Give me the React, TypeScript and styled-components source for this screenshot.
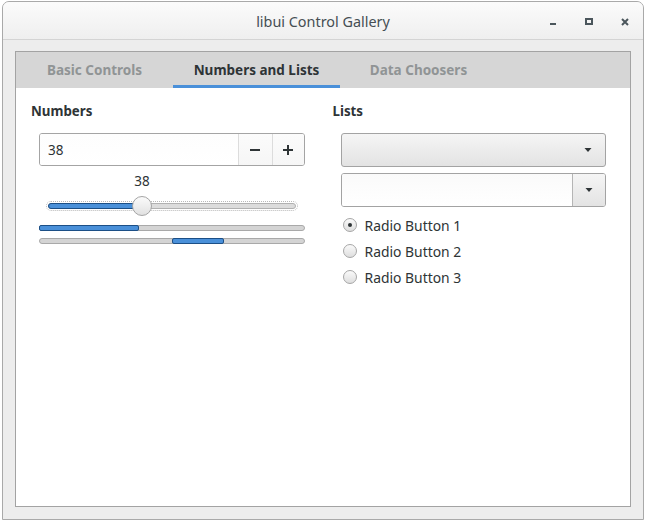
import React from "react";
import styled, { createGlobalStyle } from "styled-components";

const GlobalStyle = createGlobalStyle`
  html, body { margin: 0; padding: 0; background: #ffffff; }
  body { font-family: "Noto Sans", "DejaVu Sans", sans-serif; color: #2e3436; }
  * { box-sizing: border-box; }
`;

const Window = styled.div`
  margin: 1px 0 0 2px;
  width: 642px;
  height: 519px;
  border: 1px solid #a9a9a9;
  border-radius: 7px 7px 0 0;
  background: #ededed;
  display: flex;
  flex-direction: column;
  overflow: hidden;
`;

const TitleBar = styled.div`
  height: 38px;
  flex: none;
  border-bottom: 1px solid #d4d4d4;
  background: linear-gradient(#fbfbfb, #efefef);
  display: grid;
  grid-template-columns: 1fr auto 1fr;
  align-items: center;
`;

const Title = styled.div`
  grid-column: 2;
  font-size: 14.4px;
  color: #454e53;
  padding-top: 1px;
`;

const Controls = styled.div`
  grid-column: 3;
  justify-self: end;
  display: flex;
  height: 100%;
`;

const ControlButton = styled.div<{ $w: number }>`
  width: ${(p) => p.$w}px;
  height: 100%;
  display: flex;
  align-items: center;
  justify-content: center;
  padding-top: 3px;
`;

const Body = styled.div`
  flex: 1;
  display: flex;
  flex-direction: column;
  padding: 11px 12px 12px 12px;
`;

const Notebook = styled.div`
  flex: 1;
  border: 1px solid #a3a3a3;
  background: #ffffff;
  display: flex;
  flex-direction: column;
`;

const TabBar = styled.div`
  height: 36px;
  flex: none;
  background: #d6d6d6;
  display: flex;
`;

const Tab = styled.div<{ $active?: boolean; $w: number }>`
  width: ${(p) => p.$w}px;
  height: 100%;
  display: flex;
  align-items: center;
  justify-content: center;
  padding-top: 2px;
  font-size: 13.5px;
  font-weight: bold;
  color: ${(p) => (p.$active ? "#2e3436" : "#909495")};
  border-bottom: 3px solid ${(p) => (p.$active ? "#4a90d9" : "transparent")};
`;

const Content = styled.div`
  flex: 1;
  padding: 14px 16px 15px 15px;
  display: grid;
  grid-template-columns: 1fr 1fr;
  column-gap: 20px;
  align-items: start;
`;

const Group = styled.div`
  display: flex;
  flex-direction: column;
`;

const GroupLabel = styled.div`
  font-size: 13.3px;
  font-weight: bold;
  line-height: 18px;
  color: #2e3436;
`;

const GroupBody = styled.div`
  margin: 13px 8px 0 8px;
  display: flex;
  flex-direction: column;
`;

const SpinBox = styled.div`
  height: 33px;
  display: flex;
  border: 1px solid #a4a4a4;
  border-radius: 3px;
  background: #ffffff;
  overflow: hidden;
`;

const SpinEntry = styled.div`
  flex: 1;
  display: flex;
  align-items: center;
  padding-left: 8px;
  font-size: 13.5px;
  color: #2e3436;
  background: linear-gradient(#fdfdfd, #ffffff);
`;

const SpinButton = styled.div<{ $w: number }>`
  width: ${(p) => p.$w}px;
  border-left: 1px solid #dcdcdc;
  display: flex;
  align-items: center;
  justify-content: center;
  background: linear-gradient(#fbfbfb, #f6f6f6);
`;

const ScaleBlock = styled.div`
  margin-top: 6px;
  padding: 0 9px;
  display: flex;
  flex-direction: column;
`;

const ValueRow = styled.div`
  height: 18px;
  line-height: 18px;
  font-size: 13.5px;
  color: #2e3436;
  white-space: nowrap;
`;

const ValueText = styled.span`
  display: inline-block;
  transform: translateX(-50%);
`;

const ScaleArea = styled.div`
  margin-top: 6px;
  height: 20px;
  position: relative;
  display: flex;
  align-items: center;
`;

const Track = styled.div`
  flex: 1;
  height: 6px;
  border: 1px solid #b1b1b1;
  border-radius: 3px;
  background: #dcdcdc;
  outline: 1px dotted #b8b8b8;
  outline-offset: 1px;
  display: flex;
`;

const TrackFill = styled.div`
  height: 6px;
  margin: -1px 0 0 -1px;
  background: #4a90d9;
  border: 1px solid #1c4f86;
  border-radius: 3px 0 0 3px;
`;

const Thumb = styled.div`
  position: absolute;
  top: 0;
  width: 20px;
  height: 20px;
  margin-left: -10px;
  border-radius: 50%;
  border: 1px solid #a5a5a5;
  background: linear-gradient(#fbfbfb, #e1e1e1);
`;

const Progress = styled.div<{ $gap: number }>`
  margin-top: ${(p) => p.$gap}px;
  height: 6px;
  border: 1px solid #a9a9a9;
  border-radius: 3px;
  background: #d4d4d4;
  display: flex;
`;

const ProgressFill = styled.div`
  height: 6px;
  margin-top: -1px;
  background: #4a90d9;
  border: 1px solid #1c4f86;
  border-radius: 2px;
`;

const Combo = styled.div`
  height: 34px;
  border: 1px solid #a3a3a3;
  border-radius: 3px;
  background: linear-gradient(#f5f5f5, #e3e3e3);
  display: flex;
  align-items: center;
  justify-content: flex-end;
  padding-right: 13px;
`;

const EditCombo = styled.div`
  margin-top: 6px;
  height: 34px;
  border: 1px solid #a3a3a3;
  border-radius: 3px;
  display: flex;
  overflow: hidden;
`;

const EditEntry = styled.div`
  flex: 1;
  background: linear-gradient(#fafafa, #ffffff);
`;

const EditButton = styled.div`
  width: 33px;
  border-left: 1px solid #b5b5b5;
  background: linear-gradient(#f5f5f5, #e3e3e3);
  display: flex;
  align-items: center;
  justify-content: center;
`;

const RadioList = styled.div`
  margin-top: 5px;
  display: flex;
  flex-direction: column;
`;

const RadioRow = styled.div`
  height: 26px;
  display: flex;
  align-items: center;
  gap: 8px;
  padding-left: 2px;
  font-size: 13.9px;
  color: #2e3436;
`;

const RadioCircle = styled.div<{ $checked?: boolean }>`
  width: 14px;
  height: 14px;
  border-radius: 50%;
  border: 1px solid #a6a6a6;
  background: linear-gradient(#fafafa, #dedede);
  display: flex;
  align-items: center;
  justify-content: center;
  &::after {
    content: "";
    width: 4px;
    height: 4px;
    border-radius: 50%;
    background: ${(p) => (p.$checked ? "#2e3436" : "transparent")};
  }
`;

const Arrow = () => (
  <svg width="8" height="4" viewBox="0 0 8 4">
    <path d="M0.5 0 L7.5 0 L4 4 Z" fill="#2e3436" />
  </svg>
);

export default function App() {
  const value = 38;
  return (
    <>
      <GlobalStyle />
      <Window>
        <TitleBar>
          <Title>libui Control Gallery</Title>
          <Controls>
            <ControlButton $w={36}>
              <svg width="8" height="8" viewBox="0 0 8 8">
                <rect x="1" y="5" width="6" height="2" fill="#4b565c" />
              </svg>
            </ControlButton>
            <ControlButton $w={36}>
              <svg width="8" height="8" viewBox="0 0 8 8">
                <rect x="1" y="1" width="6" height="5" fill="none" stroke="#4b565c" strokeWidth="2" />
              </svg>
            </ControlButton>
            <ControlButton $w={36}>
              <svg width="8" height="8" viewBox="0 0 8 8">
                <path d="M1 1 L7 7 M7 1 L1 7" stroke="#4b565c" strokeWidth="2" />
              </svg>
            </ControlButton>
          </Controls>
        </TitleBar>
        <Body>
          <Notebook>
            <TabBar>
              <Tab $w={157}>Basic Controls</Tab>
              <Tab $w={167} $active>Numbers and Lists</Tab>
              <Tab $w={157}>Data Choosers</Tab>
            </TabBar>
            <Content>
              <Group>
                <GroupLabel>Numbers</GroupLabel>
                <GroupBody>
                  <SpinBox>
                    <SpinEntry>{value}</SpinEntry>
                    <SpinButton $w={34}>
                      <svg width="10" height="10" viewBox="0 0 10 10">
                        <rect x="0" y="4" width="10" height="2" fill="#2e3436" />
                      </svg>
                    </SpinButton>
                    <SpinButton $w={32}>
                      <svg width="10" height="10" viewBox="0 0 10 10">
                        <rect x="0" y="4" width="10" height="2" fill="#2e3436" />
                        <rect x="4" y="0" width="2" height="10" fill="#2e3436" />
                      </svg>
                    </SpinButton>
                  </SpinBox>
                  <ScaleBlock>
                    <ValueRow>
                      <ValueText style={{ marginLeft: `${value}%` }}>{value}</ValueText>
                    </ValueRow>
                    <ScaleArea>
                      <Track>
                        <TrackFill style={{ width: `${value}%` }} />
                      </Track>
                      <Thumb style={{ left: `${value}%` }} />
                    </ScaleArea>
                  </ScaleBlock>
                  <Progress $gap={9}>
                    <ProgressFill style={{ width: `${value}%`, marginLeft: -1 }} />
                  </Progress>
                  <Progress $gap={7}>
                    <ProgressFill style={{ width: "20%", marginLeft: "50%" }} />
                  </Progress>
                </GroupBody>
              </Group>
              <Group>
                <GroupLabel>Lists</GroupLabel>
                <GroupBody>
                  <Combo>
                    <Arrow />
                  </Combo>
                  <EditCombo>
                    <EditEntry />
                    <EditButton>
                      <Arrow />
                    </EditButton>
                  </EditCombo>
                  <RadioList>
                    <RadioRow>
                      <RadioCircle $checked />
                      Radio Button 1
                    </RadioRow>
                    <RadioRow>
                      <RadioCircle />
                      Radio Button 2
                    </RadioRow>
                    <RadioRow>
                      <RadioCircle />
                      Radio Button 3
                    </RadioRow>
                  </RadioList>
                </GroupBody>
              </Group>
            </Content>
          </Notebook>
        </Body>
      </Window>
    </>
  );
}
